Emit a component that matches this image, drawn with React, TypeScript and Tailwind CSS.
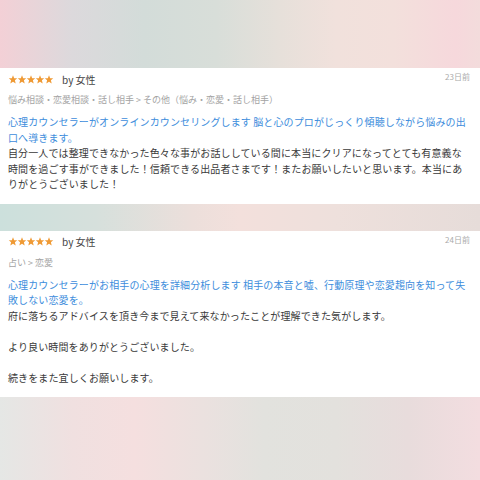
import React from 'react';

interface ReviewProps {
    date: string;
    category: string;
    title: string[];
    body: string[];
}

const Stars: React.FC = () => (
    <svg width="46" height="9" viewBox="0 0 50 10" className="shrink-0">
        {[0, 10, 20, 30, 40].map(x => (
            <polygon
                key={x}
                transform={`translate(${x},0)`}
                points="5,0.3 6.3,3.5 9.7,3.7 7.1,5.9 8,9.4 5,7.5 2,9.4 2.9,5.9 0.3,3.7 3.7,3.5"
                fill="#ef9a35"
            />
        ))}
    </svg>
);

const ReviewCard: React.FC<ReviewProps> = ({ date, category, title, body }) => (
    <div className="bg-white pl-[8px] pr-[10px] pb-[12px]">
        <div className="h-[22px] flex items-center">
            <Stars />
            <span className="ml-[8px] text-[10px] text-[#444]">by 女性</span>
            <span className="ml-auto self-start mt-[3px] text-[8px] text-[#aaa]">{date}</span>
        </div>
        <div className="h-[20px] flex items-center text-[9px] text-[#a3a3a3] whitespace-nowrap">{category}</div>
        <p className="mt-[4px] text-[10px] leading-[15.5px] tracking-[0.12px] text-[#3d8ddc] whitespace-nowrap">
            {title.map((line, i) => (
                <React.Fragment key={i}>
                    {i > 0 && <br />}
                    {line}
                </React.Fragment>
            ))}
        </p>
        <p className="text-[10px] leading-[15.5px] tracking-[0.12px] text-[#3a3a3a] whitespace-nowrap">
            {body.map((line, i) => (
                <React.Fragment key={i}>
                    {i > 0 && <br />}
                    {line || '\u00a0'}
                </React.Fragment>
            ))}
        </p>
    </div>
);

export default function App() {
    return (
        <div className="w-[480px] h-[480px] overflow-hidden flex flex-col font-['Noto_Sans_CJK_JP','Noto_Sans',sans-serif]">
            <div className="h-[68px] shrink-0 bg-[linear-gradient(to_right,#f3d0d6_0%,#dcd9dc_15%,#d3dcd9_30%,#d8ded9_45%,#e6e0da_58%,#f1e1dc_70%,#f3e0dc_82%,#f6d8dc_95%,#f3dcdc_100%)]"></div>
            <ReviewCard
                date="23日前"
                category="悩み相談・恋愛相談・話し相手 > その他（悩み・恋愛・話し相手）"
                title={[
                    '心理カウンセラーがオンラインカウンセリングします 脳と心のプロがじっくり傾聴しながら悩みの出',
                    '口へ導きます。',
                ]}
                body={[
                    '自分一人では整理できなかった色々な事がお話ししている間に本当にクリアになってとても有意義な',
                    '時間を過ごす事ができました！信頼できる出品者さまです！またお願いしたいと思います。本当にあ',
                    'りがとうございました！',
                ]}
            />
            <div className="h-[27px] shrink-0 bg-[linear-gradient(to_right,#cce0dc_0%,#d6e0dc_20%,#ecdfdb_40%,#f3e0dc_50%,#eee0dc_70%,#e6dcd9_100%)]"></div>
            <ReviewCard
                date="24日前"
                category="占い > 恋愛"
                title={[
                    '心理カウンセラーがお相手の心理を詳細分析します 相手の本音と嘘、行動原理や恋愛趨向を知って失',
                    '敗しない恋愛を。',
                ]}
                body={[
                    '府に落ちるアドバイスを頂き今まで見えて来なかったことが理解できた気がします。',
                    '',
                    'より良い時間をありがとうございました。',
                    '',
                    '続きをまた宜しくお願いします。',
                ]}
            />
            <div className="flex-1 bg-[linear-gradient(to_right,#e5e7e5_0%,#f0e0e0_15%,#f5dfdf_28%,#ebe1df_42%,#e2e2de_55%,#e3e1dd_70%,#e8dcdc_85%,#f3dde0_100%)]"></div>
        </div>
    );
}
